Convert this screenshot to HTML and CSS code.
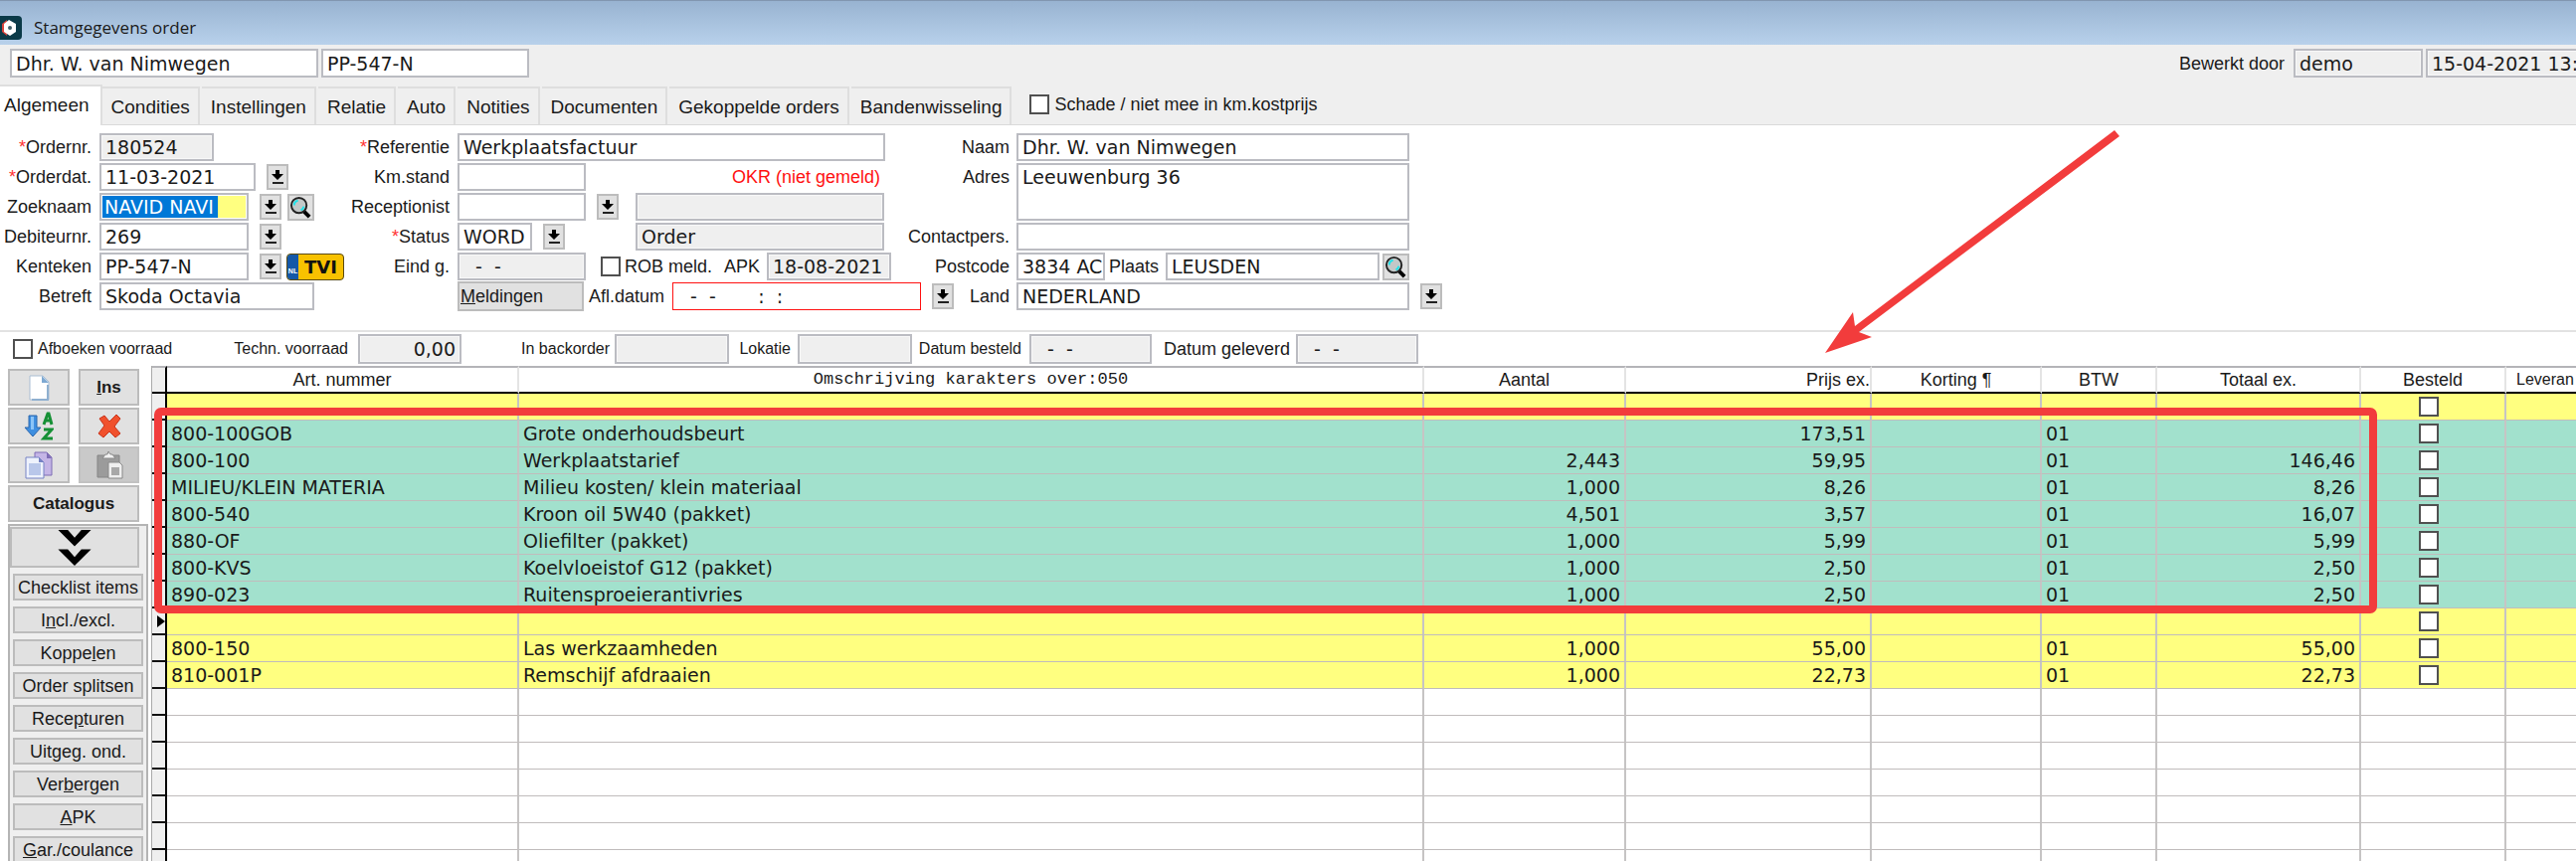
FILE: index.html
```html
<!DOCTYPE html>
<html lang="nl">
<head>
<meta charset="utf-8">
<title>Stamgegevens order</title>
<link rel="stylesheet" href="styles.css">
</head>
<body>
<svg class="defs" aria-hidden="true">
  <symbol id="down" viewBox="0 0 18 22"><path d="M7 4h4v4h4l-6 6-6-6h4z" fill="#000"/><path d="M4 16h11v2H4z" fill="#222"/></symbol>
  <symbol id="lens" viewBox="0 0 24 24"><path d="M15 16l6 6" stroke="#000" stroke-width="4"/><circle cx="10" cy="10" r="8" fill="#c3c8c8" stroke="#222" stroke-width="2"/><path d="M5 10a5 5 0 0 1 4-5M15 11a5 5 0 0 1-3 4" fill="none" stroke="#1fe3ea" stroke-width="2"/></symbol>
</svg>

<header class="titlebar">
  <svg class="logo" viewBox="0 0 22 24"><path d="M0 0h18a4 4 0 0 1 4 4v16a4 4 0 0 1-4 4H0z" fill="#0b3a48"/><path d="M2 8l5-4v16l-5-4z" fill="#d8433c"/><path d="M4 8l5-4 7 4v8l-6 4-6-4z" fill="#fff"/><circle cx="10" cy="12" r="2" fill="#44606a"/></svg>
  <h1 class="title">Stamgegevens order</h1>
</header>

<div class="summary">
  <input class="field w-client" aria-label="Klant" value="Dhr. W. van Nimwegen">
  <input class="field w-plate" aria-label="Kenteken" value="PP-547-N">
  <div class="edited">
    <label for="editor">Bewerkt door</label>
    <input class="field gray w-editor" id="editor" value="demo" readonly>
    <input class="field gray w-stamp" aria-label="Bewerkt op" value="15-04-2021 13:" readonly>
  </div>
</div>

<nav class="tabs">
  <button class="tab active">Algemeen</button>
  <button class="tab">Condities</button>
  <button class="tab">Instellingen</button>
  <button class="tab">Relatie</button>
  <button class="tab">Auto</button>
  <button class="tab">Notities</button>
  <button class="tab">Documenten</button>
  <button class="tab">Gekoppelde orders</button>
  <button class="tab">Bandenwisseling</button>
  <label class="check damage"><input type="checkbox">Schade / niet mee in km.kostprijs</label>
</nav>

<form class="form">
  <section class="col col-a">
    <div class="row"><label for="nr"><i>*</i>Ordernr.</label><input class="field gray w-115" id="nr" value="180524" readonly></div>
    <div class="row"><label for="dat"><i>*</i>Orderdat.</label><input class="field w-157" id="dat" value="11-03-2021"><button type="button" class="drop" aria-label="Kies datum"><svg><use href="#down"/></svg></button></div>
    <div class="row"><label for="zoek">Zoeknaam</label><input class="field w-150 selected" id="zoek" value="NAVID NAVI"><button type="button" class="drop" aria-label="Kies naam"><svg><use href="#down"/></svg></button><button type="button" class="find" aria-label="Zoek naam"><svg><use href="#lens"/></svg></button></div>
    <div class="row"><label for="deb">Debiteurnr.</label><input class="field w-150" id="deb" value="269"><button type="button" class="drop" aria-label="Kies debiteur"><svg><use href="#down"/></svg></button></div>
    <div class="row"><label for="ken">Kenteken</label><input class="field w-150" id="ken" value="PP-547-N"><button type="button" class="drop" aria-label="Kies kenteken"><svg><use href="#down"/></svg></button><button type="button" class="tvi"><span class="nl">NL</span><b>TVI</b></button></div>
    <div class="row"><label for="bet">Betreft</label><input class="field w-216" id="bet" value="Skoda Octavia"></div>
  </section>

  <section class="col col-b">
    <div class="row"><label for="ref"><i>*</i>Referentie</label><input class="field w-430" id="ref" value="Werkplaatsfactuur"></div>
    <div class="row"><label for="km">Km.stand</label><input class="field w-129" id="km"><span class="okr">OKR (niet gemeld)</span></div>
    <div class="row"><label for="rec">Receptionist</label><input class="field w-129" id="rec"><button type="button" class="drop" aria-label="Kies receptionist"><svg><use href="#down"/></svg></button><input class="field gray w-250 named" aria-label="Naam receptionist" readonly></div>
    <div class="row"><label for="sta"><i>*</i>Status</label><input class="field w-75" id="sta" value="WORD"><button type="button" class="drop" aria-label="Kies status"><svg><use href="#down"/></svg></button><input class="field gray w-250 state" aria-label="Statusnaam" value="Order" readonly></div>
    <div class="row"><label for="eind">Eind g.</label><input class="field gray w-129" id="eind" value="  -  -" readonly><label class="check rob"><input type="checkbox">ROB meld.</label><label class="apk" for="apk">APK</label><input class="field gray w-125" id="apk" value="18-08-2021" readonly></div>
    <div class="row"><button type="button" class="btn notes"><u>M</u>eldingen</button><label class="afl" for="afl">Afl.datum</label><input class="field red w-250" id="afl" value="  -  -       :  :"><button type="button" class="drop" aria-label="Kies afleverdatum"><svg><use href="#down"/></svg></button></div>
  </section>

  <section class="col col-c">
    <div class="row"><label for="naam">Naam</label><input class="field w-395" id="naam" value="Dhr. W. van Nimwegen"></div>
    <div class="row tall"><label for="adr">Adres</label><textarea class="field w-395" id="adr">Leeuwenburg 36</textarea></div>
    <div class="row"><label for="con">Contactpers.</label><input class="field w-395" id="con"></div>
    <div class="row"><label for="pc">Postcode</label><input class="field w-89" id="pc" value="3834 AC"><label class="place" for="pl">Plaats</label><input class="field w-215" id="pl" value="LEUSDEN"><button type="button" class="find near" aria-label="Zoek postcode"><svg><use href="#lens"/></svg></button></div>
    <div class="row"><label for="land">Land</label><input class="field w-395" id="land" value="NEDERLAND"><button type="button" class="drop" aria-label="Kies land"><svg><use href="#down"/></svg></button></div>
  </section>
</form>

<div class="stock">
  <label class="check book"><input type="checkbox">Afboeken voorraad</label>
  <label class="s-tech" for="tv">Techn. voorraad</label><input class="field gray right w-104" id="tv" value="0,00" readonly>
  <label class="s-back" for="ib">In backorder</label><input class="field gray w-115" id="ib" readonly>
  <label class="s-loc" for="lo">Lokatie</label><input class="field gray w-115" id="lo" readonly>
  <label class="s-ord" for="db">Datum besteld</label><input class="field gray w-123" id="db" value="  -  -" readonly>
  <label class="s-del" for="dg">Datum geleverd</label><input class="field gray w-123" id="dg" value="  -  -" readonly>
</div>

<main class="work">
  <aside class="side">
    <div class="tools">
      <button class="btn" aria-label="Nieuw"><svg class="ico" viewBox="0 0 30 30"><path d="M6 3h13l6 6v18H6z" fill="#fff" stroke="#a9bdd3" stroke-width="1"/><path d="M18 3l7 7h-7z" fill="#7ea9d2"/><path d="M24 12v15H8" fill="none" stroke="#8fb0d0" stroke-width="2"/></svg></button>
      <button class="btn strong"><u>I</u>ns</button>
      <button class="btn" aria-label="Sorteren"><svg class="ico" viewBox="0 0 30 30"><path d="M5 4h8v12h4l-8 9-8-9h4z" fill="#3f8fe0" stroke="#2a66ad"/><path d="M7 5h3v13H7z" fill="#8cc4f7"/><path d="M20 13l4-11h1l3 11M21 9h7" fill="none" stroke="#159035" stroke-width="3"/><path d="M20 18h8l-8 9h9" fill="none" stroke="#159035" stroke-width="3"/></svg></button>
      <button class="btn" aria-label="Verwijderen"><svg class="ico" viewBox="0 0 30 30"><path d="M5 7l5-3 5 6 7-7 4 4-6 8 6 7-5 4-6-6-6 6-5-4 6-8z" fill="#f0512d" stroke="#c8331a"/></svg></button>
      <button class="btn" aria-label="Kopiëren"><svg class="ico" viewBox="0 0 30 30"><path d="M11 2h12l5 5v18H11z" fill="#c4b5e6" stroke="#7e6cb5"/><path d="M23 2v6h5z" fill="#7e6cb5"/><path d="M2 7h13l5 5v16H2z" fill="#eef2fc" stroke="#7683c4"/><path d="M15 7v5h5z" fill="#7683c4"/><path d="M5 13h12v12H5z" fill="#b9c7ea"/></svg></button>
      <button class="btn off" aria-label="Plakken"><svg class="ico" viewBox="0 0 30 30"><path d="M3 5h22v22H3z" fill="#9b9b9b" stroke="#858585"/><path d="M8 8l3-4h2l1-3 2 3h2l3 4z" fill="#f2f2f2" stroke="#8a8a8a"/><path d="M14 12h11l3 3v13H14z" fill="#efefef" stroke="#888"/><path d="M17 17h8v8h-8z" fill="#a8a8a8"/></svg></button>
      <button class="btn strong wide">Catalogus</button>
    </div>
    <div class="panel">
      <button class="btn more" aria-label="Meer"><svg viewBox="0 0 36 38"><path d="M1 1h10l7 8 7-8h10L18 18z" fill="#000"/><path d="M1 21h10l7 8 7-8h10L18 38z" fill="#000"/></svg></button>
      <button class="btn">Checklist items</button>
      <button class="btn">I<u>n</u>cl./excl.</button>
      <button class="btn">Koppe<u>l</u>en</button>
      <button class="btn">Order splitsen</button>
      <button class="btn">Rece<u>p</u>turen</button>
      <button class="btn">Uitgeg. ond.</button>
      <button class="btn">Ver<u>b</u>ergen</button>
      <button class="btn"><u>A</u>PK</button>
      <button class="btn"><u>G</u>ar./coulance</button>
    </div>
  </aside>

  <div class="sheet">
    <table class="lines">
      <colgroup><col class="c-mark"><col class="c-art"><col><col class="c-qty"><col class="c-price"><col class="c-disc"><col class="c-vat"><col class="c-total"><col class="c-ord"><col class="c-sup"></colgroup>
      <thead><tr><th></th><th>Art. nummer</th><th class="mono">Omschrijving karakters over:050</th><th>Aantal</th><th class="end">Prijs ex.</th><th>Korting ¶</th><th>BTW</th><th>Totaal ex.</th><th>Besteld</th><th class="start">Leveran</th></tr></thead>
      <tbody id="lines"></tbody>
    </table>
    <div class="frame"></div>
  </div>
</main>

<svg class="pointer" viewBox="0 0 296 224" aria-hidden="true"><path d="M0 224L28 183l2 14L291 0l5 6L34 203l13 5z" fill="#f23c3c"/></svg>

<script>
const rows = [
  ["y"],
  ["g", "800-100GOB", "Grote onderhoudsbeurt", "", "173,51", "01", ""],
  ["g", "800-100", "Werkplaatstarief", "2,443", "59,95", "01", "146,46"],
  ["g", "MILIEU/KLEIN MATERIA", "Milieu kosten/ klein materiaal", "1,000", "8,26", "01", "8,26"],
  ["g", "800-540", "Kroon oil 5W40 (pakket)", "4,501", "3,57", "01", "16,07"],
  ["g", "880-OF", "Oliefilter (pakket)", "1,000", "5,99", "01", "5,99"],
  ["g", "800-KVS", "Koelvloeistof G12 (pakket)", "1,000", "2,50", "01", "2,50"],
  ["g", "890-023", "Ruitensproeierantivries", "1,000", "2,50", "01", "2,50"],
  ["y current"],
  ["y", "800-150", "Las werkzaamheden", "1,000", "55,00", "01", "55,00"],
  ["y", "810-001P", "Remschijf afdraaien", "1,000", "22,73", "01", "22,73"],
  [""], [""], [""], [""], [""], [""], [""]
];
document.getElementById("lines").innerHTML = rows.map(([kind, art = "", text = "", qty = "", price = "", vat = "", total = ""]) =>
  `<tr class="${kind}"><td class="mark"></td><td>${art}</td><td>${text}</td><td class="num">${qty}</td><td class="num">${price}</td><td></td><td>${vat}</td><td class="num">${total}</td><td class="tick">${kind ? '<input type="checkbox" aria-label="Besteld">' : ""}</td><td></td></tr>`
).join("");
</script>
</body>
</html>
```
FILE: styles.css
```css
* { box-sizing: border-box; }

body {
  margin: 0;
  height: 100vh;
  overflow: hidden;
  display: flex;
  flex-direction: column;
  position: relative;
  background: #fff;
  color: #1a1a1a;
  font: 18px/24px "Liberation Sans", Arial, sans-serif;
}

button, input, textarea { font: inherit; color: inherit; margin: 0; }
button { padding: 0; border-radius: 0; }
i { font-style: normal; color: #f33; }
label { flex: none; white-space: nowrap; }
.defs { display: none; }

.titlebar {
  flex: none;
  height: 45px;
  padding-top: 10px;
  display: flex;
  align-items: center;
  gap: 12px;
  border-top: 1px solid #8196b0;
  background: linear-gradient(#98b3d1, #b8d1eb);
}
.logo { width: 22px; height: 24px; }
.title { margin: 0; font: 17px/24px "Open Sans", sans-serif; }

.summary {
  flex: none;
  height: 39px;
  padding: 4px 0 0 10px;
  display: flex;
  gap: 3px;
  background: #efefef;
  overflow: hidden;
}
.summary .field { height: 29px; }
.edited { flex: none; margin-left: auto; display: flex; align-items: center; gap: 3px; height: 29px; }
.edited label { margin-right: 6px; }
.edited .w-stamp { margin-right: -59px; }

.field {
  flex: none;
  height: 28px;
  padding: 0 4px;
  border: 2px solid #bbbcc2;
  border-radius: 0;
  background: #fff;
  outline: 0;
  resize: none;
  font: 19px/24px "DejaVu Sans", Verdana, sans-serif;
}
.gray { background: #efefef; box-shadow: inset 0 0 0 1px #f8f8f8; }
.red { border: 1px solid #f11; padding: 0 5px; }
.right { text-align: right; }
.selected {
  color: #fff;
  padding: 0 3px;
  box-shadow: inset 0 0 0 1px #fff;
  background: linear-gradient(90deg, #0078d7 117px, #ffff80 117px);
}

.w-client { width: 310px; }
.w-plate { width: 209px; }
.w-editor { width: 130px; }
.w-stamp { width: 210px; }
.w-75 { width: 75px; }
.w-89 { width: 89px; padding-right: 0; }
.w-104 { width: 104px; }
.w-115 { width: 115px; }
.w-123 { width: 123px; }
.w-125 { width: 125px; }
.w-129 { width: 129px; }
.w-150 { width: 150px; }
.w-157 { width: 157px; }
.w-215 { width: 215px; }
.w-216 { width: 216px; }
.w-250 { width: 250px; }
.w-395 { width: 395px; }
.w-430 { width: 430px; }

input[type="checkbox"] {
  appearance: none;
  flex: none;
  width: 20px;
  height: 20px;
  border: 2px solid #505050;
  background: #fff;
}
.check { display: flex; align-items: center; gap: 5px; }

.tabs {
  flex: none;
  height: 42px;
  display: flex;
  align-items: flex-end;
  gap: 2px;
  background: #efefef;
  border-bottom: 1px solid #dadada;
  font-size: 19px;
}
.tab {
  height: 38px;
  padding: 2px 8px 0 9px;
  border: 2px solid #dedede;
  border-width: 2px 2px 0 0;
  background: #efefef;
}
.tab.active { height: 41px; margin: 0 -2px -1px 0; padding: 0 11px 2px 4px; background: #fff; }
.damage { align-self: center; margin-left: 16px; font-size: 18px; }

.form { flex: none; display: flex; padding: 8px 0 20px; }
.col { display: flex; flex-direction: column; gap: 2px; }
.col-a { width: 346px; }
.col-b { width: 559px; }
.row { display: flex; align-items: center; height: 28px; }
.row > label:first-child { text-align: right; }
.col-a .row > label:first-child { width: 92px; margin-right: 8px; }
.col-b .row > label:first-child { width: 106px; margin-right: 8px; }
.col-c .row > label:first-child { width: 110px; margin-right: 7px; }
.row.tall { height: 58px; align-items: flex-start; }
.tall label { line-height: 28px; }
.tall .field { height: 58px; }

.drop, .find, .btn { border: 2px solid #bcbcbc; background: #e1e1e1; }
.drop { flex: none; width: 22px; height: 26px; margin-left: 11px; }
.drop svg { display: block; width: 18px; height: 22px; }
.find { flex: none; width: 27px; height: 27px; margin-left: 6px; }
.find svg { display: block; width: 23px; height: 23px; }
.near { margin-left: 3px; }
.tvi {
  flex: none;
  display: flex;
  width: 58px;
  height: 27px;
  margin-left: 5px;
  border: 1px solid #5a4a10;
  border-radius: 4px;
  background: #f8c100;
  overflow: hidden;
}
.nl { width: 11px; height: 25px; padding-top: 11px; background: #1458a8; color: #fff; font: bold 7px/12px "Liberation Sans", sans-serif; }
.tvi b { flex: 1; font: bold 18px/25px "DejaVu Sans", sans-serif; color: #111; }

.okr { margin-left: 147px; color: #f11; }
.named { margin-left: 17px; }
.state { margin-left: 71px; }
.rob { width: 124px; margin-left: 15px; gap: 4px; }
.apk { width: 43px; }
.notes { flex: none; width: 127px; height: 30px; margin-left: 114px; padding-left: 1px; text-align: left; }
.afl { width: 84px; margin-left: 5px; }
.place { width: 57px; margin-left: 4px; }

.stock {
  flex: none;
  display: flex;
  align-items: center;
  height: 36px;
  padding-left: 13px;
  border-top: 2px solid #e2e2e2;
  font-size: 16px;
}
.stock .field { height: 30px; }
.stock > label:not(.check) { text-align: right; }
.book { width: 197px; }
.s-tech { width: 140px; margin-right: 10px; }
.s-back { width: 149px; margin-right: 5px; }
.s-loc { width: 62px; margin-right: 7px; }
.s-ord { width: 110px; margin-right: 8px; }
.stock > .s-del { width: 139px; margin-right: 6px; font-size: 18px; }

.work { flex: 1; min-height: 0; display: flex; }
.side { flex: none; width: 152px; padding: 3px 0 0 8px; }
.tools { display: grid; grid-template-columns: 62px 61px; grid-auto-rows: 37px; gap: 2px 9px; }
.tools .btn { display: flex; align-items: center; justify-content: center; }
.wide { grid-column: 1 / 3; }
.strong { font-size: 17px; font-weight: bold; }
.off { background: #c9c9c9; border-color: #c2c2c2; }
.ico { width: 30px; height: 30px; }
.panel {
  display: flex;
  flex-direction: column;
  gap: 6px;
  width: 141px;
  margin-top: 2px;
  padding: 1px 3px 20px;
  border: 2px solid #b4b4b4;
  background: #efefef;
}
.panel .btn { flex: none; height: 27px; line-height: 22px; white-space: nowrap; }
.panel .more { width: 130px; height: 41px; margin: 0 0 0 -3px; }
.more svg { display: block; width: 36px; height: 37px; margin: 0 auto; }

.sheet { flex: 1; min-width: 0; position: relative; overflow: hidden; }
.lines { width: 100%; table-layout: fixed; border-spacing: 0; border-left: 1px solid #aaa; }
.c-mark { width: 15px; }
.c-art { width: 354px; }
.c-qty { width: 203px; }
.c-price { width: 247px; }
.c-disc { width: 171px; }
.c-vat { width: 116px; }
.c-total { width: 205px; }
.c-ord { width: 146px; }
.c-sup { width: 70px; }

.lines th {
  height: 28px;
  padding: 0;
  border-top: 2px solid #b4b4b8;
  border-right: 2px solid #e4e4e4;
  border-bottom: 2px solid #000;
  font-weight: normal;
  line-height: 24px;
  white-space: nowrap;
}
.lines th:first-child, .lines .mark { background: #efefef; border-right: 2px solid #000; }
.lines th.mono { font: 17px/24px "Liberation Mono", monospace; }
.lines th.end { text-align: right; }
.lines th.start { padding-left: 10px; text-align: left; border-right: 0; font-size: 16px; }
.lines td {
  height: 27px;
  padding: 0 4px;
  border-right: 2px solid #c6c4c4;
  border-bottom: 1px solid #c0bcbc;
  font: 19px/24px "DejaVu Sans", Verdana, sans-serif;
  white-space: nowrap;
}
.lines td:last-child { border-right: 0; }
.lines .mark { padding: 0; border-bottom: 2px solid #111; }
.lines .num { text-align: right; }
.lines .tick { padding: 0 8px 0 0; text-align: center; }
.tick input { display: block; margin: 0 auto; }
.y { background: #ffff80; }
.g { background: #a2e1cd; }
.current .mark::before {
  content: "";
  display: block;
  margin-left: 5px;
  width: 0;
  border: 6px solid transparent;
  border-left: 8px solid #000;
  border-right: 0;
}

.frame {
  position: absolute;
  top: 42px;
  left: 3px;
  right: 200px;
  height: 207px;
  border: 8px solid #f23c3c;
  border-radius: 7px;
}
.pointer { position: absolute; top: 131px; right: 459px; width: 296px; height: 224px; }
```
